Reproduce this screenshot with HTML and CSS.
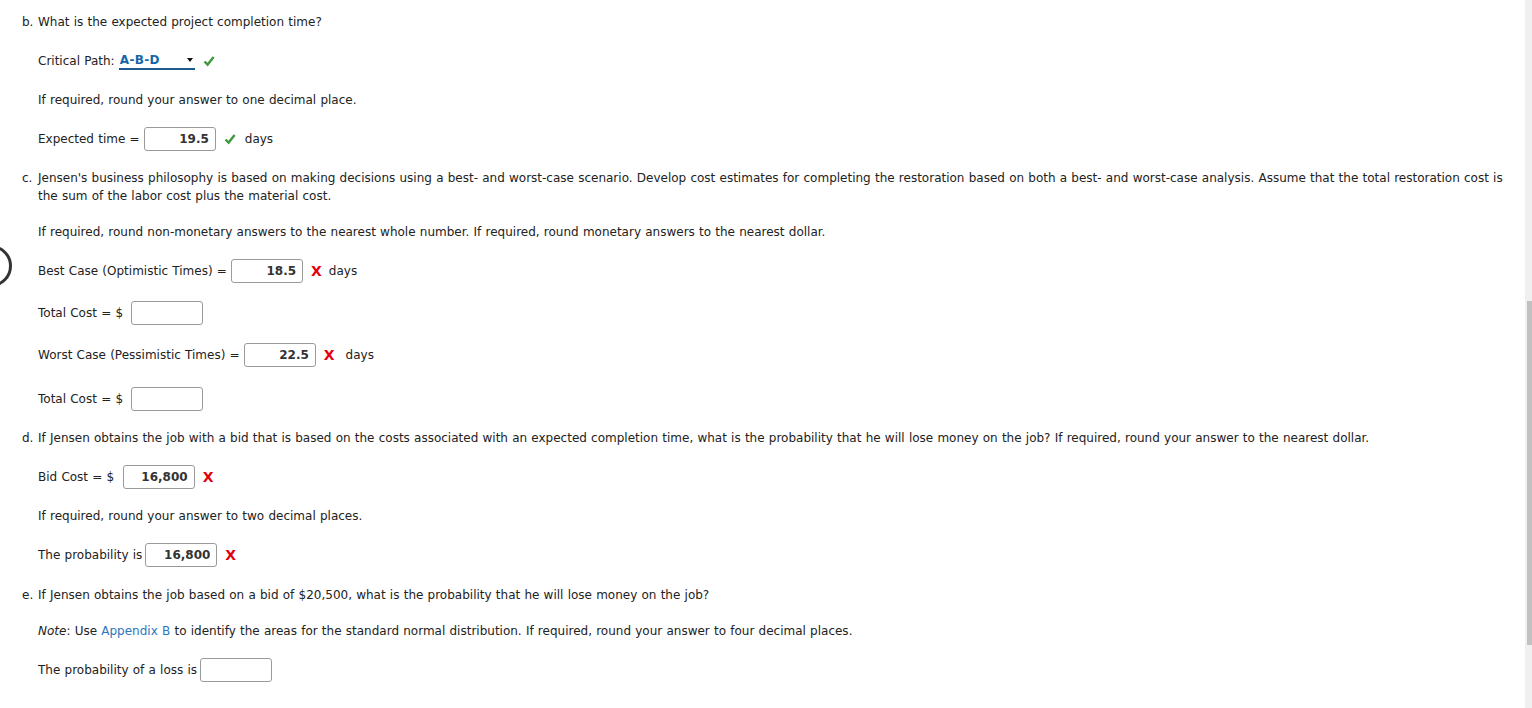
FILE: index.html
```html
<!DOCTYPE html>
<html lang="en">
<head>
    <meta charset="UTF-8">
    <title>Project completion</title>
    <link rel="stylesheet" href="styles.css">
</head>
<body>
    <div class="page">
        <!-- part b -->
        <div class="q"><span class="ql">b.</span><span class="qt">What is the expected project completion time?</span></div>
        <div class="row">Critical Path:&nbsp;<span class="pick">A-B-D<span class="caret"></span></span>
            <svg class="mark check" viewBox="0 0 12 12"><path d="M1.5 6.5 L4.6 9.6 L10.6 2"/></svg>
        </div>
        <p class="line">If required, round your answer to one decimal place.</p>
        <div class="row">Expected time =&nbsp;<input class="box" type="text" value="19.5" readonly>
            <svg class="mark check" viewBox="0 0 12 12"><path d="M1.5 6.5 L4.6 9.6 L10.6 2"/></svg><span class="unit unit-ok">days</span>
        </div>

        <!-- part c -->
        <div class="q"><span class="ql">c.</span><span class="qt">Jensen's business philosophy is based on making decisions using a best- and worst-case scenario. Develop cost estimates for completing the restoration based on both a best- and worst-case analysis. Assume that the total restoration cost is the sum of the labor cost plus the material cost.</span></div>
        <p class="line">If required, round non-monetary answers to the nearest whole number. If required, round monetary answers to the nearest dollar.</p>
        <div class="row">Best Case (Optimistic Times) =&nbsp;<input class="box" type="text" value="18.5" readonly>
            <span class="mark wrong">X</span><span class="unit">days</span>
        </div>
        <div class="row">Total Cost = $&nbsp;&nbsp;<input class="box" type="text" value="" readonly></div>
        <div class="row">Worst Case (Pessimistic Times) =&nbsp;<input class="box" type="text" value="22.5" readonly>
            <span class="mark wrong">X</span><span class="unit unit-wide">days</span>
        </div>
        <div class="row row-gap">Total Cost = $&nbsp;&nbsp;<input class="box" type="text" value="" readonly></div>

        <!-- part d -->
        <div class="q"><span class="ql">d.</span><span class="qt">If Jensen obtains the job with a bid that is based on the costs associated with an expected completion time, what is the probability that he will lose money on the job? If required, round your answer to the nearest dollar.</span></div>
        <div class="row">Bid Cost = $&nbsp;&nbsp;<input class="box" type="text" value="16,800" readonly>
            <span class="mark wrong">X</span>
        </div>
        <p class="line">If required, round your answer to two decimal places.</p>
        <div class="row">The probability is<input class="box box-tight" type="text" value="16,800" readonly>
            <span class="mark wrong">X</span>
        </div>

        <!-- part e -->
        <div class="q part-gap"><span class="ql">e.</span><span class="qt">If Jensen obtains the job based on a bid of $20,500, what is the probability that he will lose money on the job?</span></div>
        <p class="line"><em>Note</em>: Use <a href="#">Appendix B</a> to identify the areas for the standard normal distribution. If required, round your answer to four decimal places.</p>
        <div class="row">The probability of a loss is<input class="box box-tight" type="text" value="" readonly></div>
    </div>

    <!-- nav ring cut off at left edge -->
    <div class="ring"></div>

    <!-- window scrollbar -->
    <div class="scrollbar"><div class="thumb"></div></div>
</body>
</html>
```

FILE: styles.css
```css
html, body {
    margin: 0;
    height: 100%;
    overflow: hidden;
    background-color: #fff;
}
body {
    font-family: "DejaVu Sans", Verdana, sans-serif;
    font-size: 12px;
    word-spacing: 0.4px;
    color: #222;
}
.page {
    padding: 13px 10px 0 22px;
}
.q {
    display: flex;
    line-height: 18px;
    margin-bottom: 18px;
}
.ql {
    width: 16px;
    flex-shrink: 0;
}
.qt {
    max-width: 1476px;
}
.line {
    margin: 0 0 18px 16px;
    line-height: 18px;
}
.row {
    display: flex;
    align-items: center;
    height: 24px;
    margin: 0 0 18px 16px;
    white-space: nowrap;
}
.row-gap {
    margin-top: 20px;
}
.part-gap {
    margin-top: 19px;
}
.box {
    box-sizing: border-box;
    width: 72px;
    height: 24px;
    margin: 0;
    padding: 0 6px 0 4px;
    border: 1px solid #9a9a9a;
    border-radius: 3px;
    font-family: "DejaVu Sans", Verdana, sans-serif;
    font-size: 12px;
    font-weight: bold;
    color: #333;
    text-align: right;
    background-color: #fff;
    outline: none;
}
.box-tight {
    margin-left: 3px;
}
.pick {
    position: relative;
    display: inline-block;
    box-sizing: border-box;
    width: 76px;
    height: 18px;
    line-height: 16px;
    padding-left: 1px;
    border-bottom: 2px solid #1d5b8e;
    font-weight: bold;
    letter-spacing: 0.3px;
    color: #1567a8;
}
.caret {
    position: absolute;
    right: 2px;
    top: 6px;
    width: 0;
    height: 0;
    border-left: 3px solid transparent;
    border-right: 3px solid transparent;
    border-top: 4px solid #111;
}
.mark {
    margin-left: 8px;
}
.check {
    width: 12px;
    height: 12px;
    fill: none;
    stroke: #3d9a3d;
    stroke-width: 2.4;
}
.wrong {
    font-weight: bold;
    font-size: 14px;
    color: #e3000b;
}
.unit {
    margin-left: 7px;
}
.unit-ok {
    margin-left: 9px;
}
.unit-wide {
    margin-left: 11px;
}
a {
    color: #2b76c0;
    text-decoration: none;
}
.ring {
    position: absolute;
    left: -30px;
    top: 245px;
    width: 36px;
    height: 36px;
    border: 3px solid #333;
    border-radius: 50%;
}
.scrollbar {
    position: fixed;
    top: 0;
    right: 0;
    width: 7px;
    height: 100%;
    background-color: #f0f0f0;
}
.thumb {
    margin: 301px 0 0 2px;
    height: 344px;
    background-color: #c1c1c1;
}
```
